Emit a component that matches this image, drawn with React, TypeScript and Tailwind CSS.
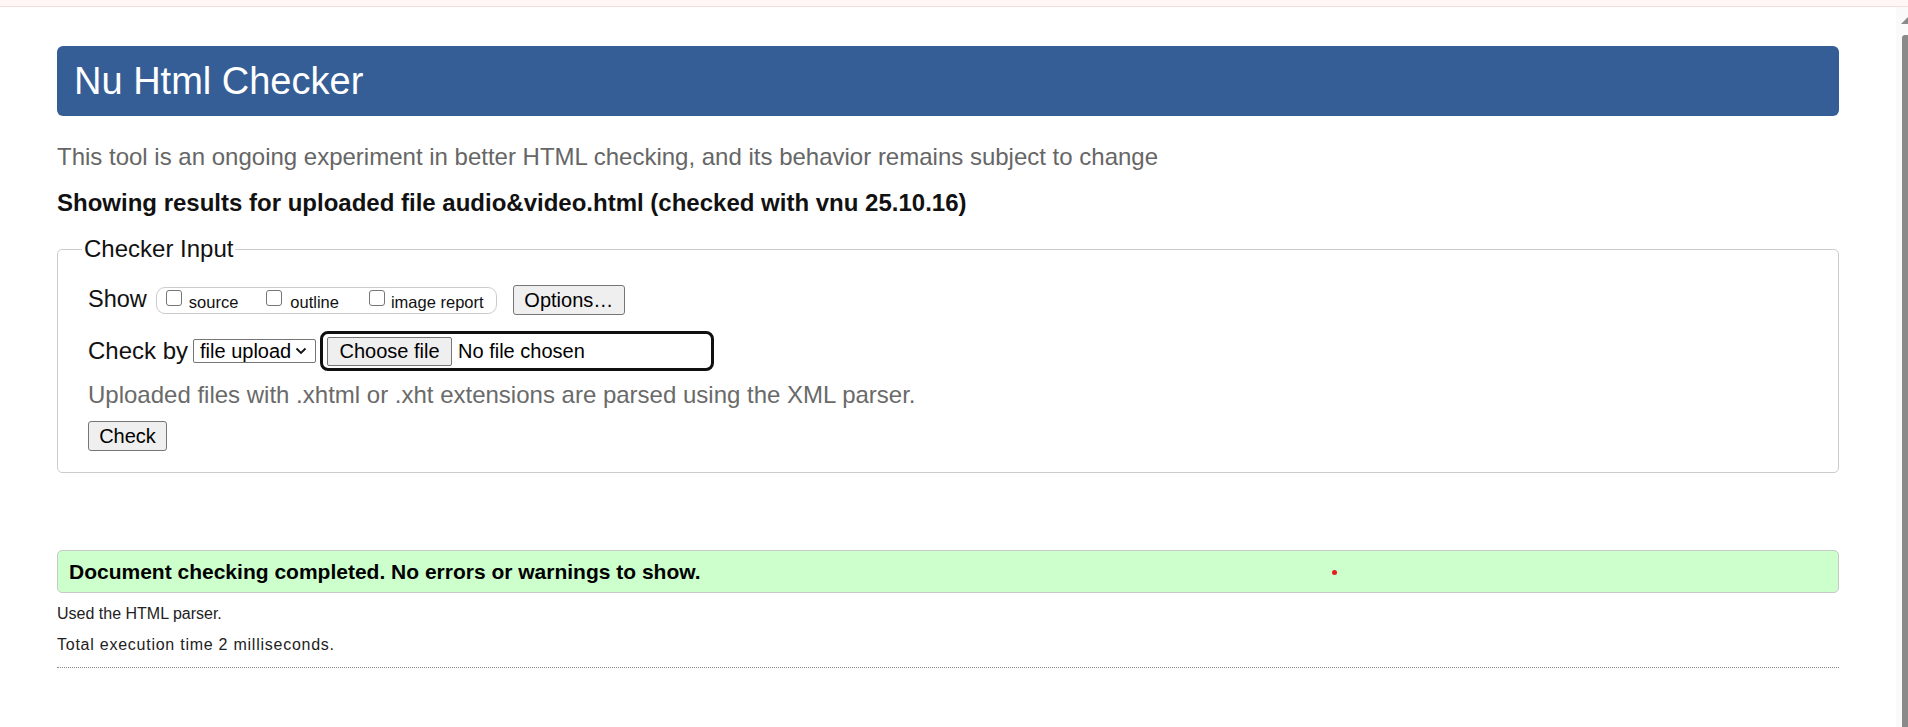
import React from "react";

function Box() {
  return <span className="inline-block w-[16px] h-[16px] border border-[#767676] rounded-[3px] bg-white shrink-0 -mt-[5px]" />;
}

export default function App() {
  const font = { fontFamily: '"Liberation Sans", Arial, sans-serif' };
  return (
    <div className="w-[1908px] h-[727px] bg-white overflow-hidden flex flex-col" style={font}>
      <div className="h-[7px] w-full bg-[#fff6f5] border-b border-[#f6dede] shrink-0" />
      <div className="flex flex-1 min-h-0">
        <div className="flex-1 min-w-0 px-[57px] relative">
          <div className="mt-[39px] h-[70px] bg-[#365e96] rounded-[6px] flex items-center pl-[17px]">
            <span className="text-white text-[38px] leading-none">Nu Html Checker</span>
          </div>
          <div className="mt-[27px] h-[28px] flex items-center text-[24px] text-[#666]">
            This tool is an ongoing experiment in better HTML checking, and its behavior remains subject to change
          </div>
          <div className="mt-[18px] h-[28px] flex items-center text-[24px] font-bold text-[#111]">
            Showing results for uploaded file audio&amp;video.html (checked with vnu 25.10.16)
          </div>
          <fieldset className="mt-[18px] border border-[#cccccc] rounded-[5px] pl-[24px] pr-[24px] pb-[21px]">
            <legend className="px-[2px] text-[24px] leading-[28px] text-[#111]">Checker Input</legend>
            <div className="ml-[6px] mt-[21px] h-[32px] flex items-center">
              <span className="text-[23.5px] text-[#111] mr-[9px]">Show</span>
              <div className="h-[27px] w-[341px] border border-[#cccccc] rounded-[9px] flex items-center pl-[9px] text-[16.5px] text-[#111]">
                <Box />
                <span className="ml-[7px] mt-[4px]">source</span>
                <span className="ml-[28px] flex items-center"><Box /></span>
                <span className="ml-[8px] mt-[4px]">outline</span>
                <span className="ml-[30px] flex items-center"><Box /></span>
                <span className="ml-[6px] mt-[4px]">image report</span>
              </div>
              <div className="ml-[16px] h-[30px] w-[112px] bg-[#efefef] border border-[#767676] rounded-[3px] flex items-center justify-center text-[20px] text-black">
                Options…
              </div>
            </div>
            <div className="ml-[6px] mt-[15px] h-[40px] flex items-center">
              <span className="text-[24px] text-[#111]">Check by</span>
              <div className="ml-[5px] h-[24px] w-[123px] border border-[#767676] rounded-[2px] bg-white flex items-center pl-[6px] text-[20px] text-black">
                <span>file upload</span>
                <svg className="ml-[4px]" width="12" height="8" viewBox="0 0 12 8"><path d="M1.5 1.5 L6 6 L10.5 1.5" fill="none" stroke="#111" strokeWidth="1.8" /></svg>
              </div>
              <div className="ml-[4px] h-[40px] w-[394px] border-[3px] border-[#101010] rounded-[8px] flex items-center pl-[4px] text-[20px] text-black">
                <div className="h-[29px] w-[125px] bg-[#efefef] border border-[#767676] rounded-[2px] flex items-center justify-center">Choose file</div>
                <span className="ml-[6px]">No file chosen</span>
              </div>
            </div>
            <div className="ml-[6px] mt-[10px] h-[28px] flex items-center text-[24px] text-[#6a6a6a]">
              Uploaded files with .xhtml or .xht extensions are parsed using the XML parser.
            </div>
            <div className="ml-[6px] mt-[12px] h-[30px] w-[79px] bg-[#efefef] border border-[#767676] rounded-[3px] flex items-center justify-center text-[20px] text-black">
              Check
            </div>
          </fieldset>
          <div className="mt-[77px] h-[43px] bg-[#ccffcc] border border-[#c8c8c8] rounded-[5px] flex items-center pl-[11px] text-[21px] font-bold text-black relative">
            Document checking completed. No errors or warnings to show.
            <span className="absolute left-[1274px] top-[19px] w-[5px] h-[5px] rounded-full bg-[#e81c1c]" />
          </div>
          <div className="mt-[11px] h-[20px] flex items-center text-[16px] text-[#222]">Used the HTML parser.</div>
          <div className="mt-[11px] h-[20px] flex items-center text-[16px] text-[#222] tracking-[0.75px]">Total execution time 2 milliseconds.</div>
          <div className="mt-[12px] border-t border-dotted border-[#888]" />
        </div>
        <div className="w-[12px] shrink-0 bg-[#fafafa] flex flex-col items-end">
          <svg className="mt-[10px]" width="8" height="7" viewBox="0 0 8 7"><path d="M8 0 L8 7 L1 7 Z" fill="#8a8a8a" /></svg>
          <div className="mt-[11px] w-[6px] flex-1 bg-[#8a8a8a] rounded-tl-[3px]" />
        </div>
      </div>
    </div>
  );
}
